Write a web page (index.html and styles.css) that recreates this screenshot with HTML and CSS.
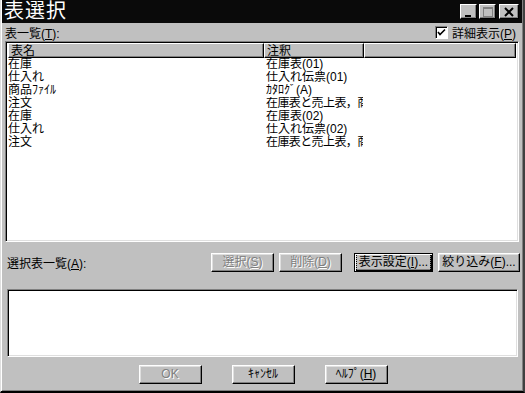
FILE: index.html
```html
<!DOCTYPE html>
<html lang="ja">
<head>
    <meta charset="UTF-8">
    <title>表選択</title>
    <link rel="stylesheet" href="styles.css">
</head>
<body>
    <div class="window">
        <div class="titlebar">
            <span class="title">表選択</span>
            <div class="caption-btns">
                <span class="cap"><svg width="14" height="12" viewBox="0 0 14 12"><rect x="3" y="9" width="6" height="2" fill="#000"/></svg></span>
                <span class="cap"><svg width="14" height="12" viewBox="0 0 14 12"><rect x="2.5" y="1.5" width="9" height="9" fill="none" stroke="#808080"/><rect x="2" y="1" width="10" height="2" fill="#808080"/></svg></span>
                <span class="cap close"><svg width="14" height="12" viewBox="0 0 14 12"><path d="M3 2 L11 10 M11 2 L3 10" stroke="#000" stroke-width="2"/></svg></span>
            </div>
        </div>

        <div class="content">
            <div class="top-row">
                <span>表一覧(<u>T</u>):</span>
                <label class="check">
                    <span class="box"><svg width="9" height="9" viewBox="0 0 9 9"><path d="M1 4 L3 6.5 L8 1.5" stroke="#000" stroke-width="1.6" fill="none"/></svg></span>
                    <span>詳細表示(<u>P</u>)</span>
                </label>
            </div>

            <div class="listbox tables">
                <div class="header">
                    <span class="col-name">表名</span>
                    <span class="col-note">注釈</span>
                    <span class="col-rest"></span>
                </div>
                <div class="row"><span class="c1">在庫</span><span class="c2">在庫表(01)</span></div>
                <div class="row"><span class="c1">仕入れ</span><span class="c2">仕入れ伝票(01)</span></div>
                <div class="row"><span class="c1">商品ﾌｧｲﾙ</span><span class="c2">ｶﾀﾛｸﾞ(A)</span></div>
                <div class="row"><span class="c1">注文</span><span class="c2 tight">在庫表と売上表，商</span></div>
                <div class="row"><span class="c1">在庫</span><span class="c2">在庫表(02)</span></div>
                <div class="row"><span class="c1">仕入れ</span><span class="c2">仕入れ伝票(02)</span></div>
                <div class="row"><span class="c1">注文</span><span class="c2 tight">在庫表と売上表，商</span></div>
            </div>

            <div class="action-row">
                <span class="sel-label">選択表一覧(<u>A</u>):</span>
                <div class="actions">
                    <span class="btn disabled w63">選択(<u>S</u>)</span>
                    <span class="btn disabled w63">削除(<u>D</u>)</span>
                    <span class="btn default w79"><span class="focus">表示設定(<u>I</u>)...</span></span>
                    <span class="btn w82">絞り込み(<u>F</u>)...</span>
                </div>
            </div>

            <div class="listbox selected"></div>

            <div class="bottom-row">
                <span class="btn disabled w63">OK</span>
                <span class="btn w63">ｷｬﾝｾﾙ</span>
                <span class="btn w63">ﾍﾙﾌﾟ(<u>H</u>)</span>
            </div>
        </div>
    </div>
</body>
</html>
```

FILE: styles.css
```css
body { margin: 0; font-family: "Liberation Sans", "Noto Sans CJK JP", sans-serif; font-size: 12px; color: #000; background: #c0c0c0; }
u { text-decoration: underline; text-underline-offset: 1px; }

.window { width: 525px; height: 393px; box-sizing: border-box; background: #c0c0c0; padding: 0 2px 2px 2px; border-left: 1px solid #dfdfdf; border-right: 2px solid #404040; border-bottom: 2px solid #000; box-shadow: inset 1px 0 #fff, inset -1px -1px #808080; display: flex; flex-direction: column; }

.titlebar { height: 23px; background: #0a0a0a; color: #fff; display: flex; align-items: center; justify-content: space-between; margin: 0 -1px 0 -1px; padding: 0 3px 0 2px; }
.title { font-size: 20px; line-height: 23px; letter-spacing: 1px; }
.caption-btns { display: flex; gap: 2px; }
.cap { width: 17px; height: 15px; box-sizing: border-box; background: #c0c0c0; border: 1px solid; border-color: #fff #000 #000 #fff; box-shadow: inset -1px -1px #808080; display: flex; align-items: center; justify-content: center; }
.cap.close { margin-left: 1px; width: 20px; }

.content { flex: 1; display: flex; flex-direction: column; padding: 0 1px 0 2px; }

.top-row { height: 18px; display: flex; align-items: center; justify-content: space-between; padding: 0 4px 0 0; }
.check { display: flex; align-items: center; gap: 4px; }
.box { width: 13px; height: 13px; box-sizing: border-box; background: #fff; border: 1px solid; border-color: #808080 #fff #fff #808080; box-shadow: inset 1px 1px #000; display: flex; align-items: center; justify-content: center; }

.listbox { background: #fff; box-sizing: border-box; border: 1px solid; border-color: #808080 #fff #fff #808080; box-shadow: inset 1px 1px #000, inset -1px -1px #dfdfdf; padding: 1px 2px 2px 2px; }
.tables { height: 201px; margin-right: 1px; }
.header { display: flex; height: 15px; line-height: 14px; }
.header span { box-sizing: border-box; background: #c0c0c0; border: 1px solid; border-color: #fff #000 #000 #fff; box-shadow: inset -1px -1px #808080; padding-left: 2px; }
.col-name { width: 256px; }
.col-note { width: 100px; }
.col-rest { flex: 1; }
.row { display: flex; height: 13px; line-height: 13px; white-space: nowrap; }
.c1 { width: 258px; }
.c2 { width: 97px; overflow: hidden; }
.c2.tight { letter-spacing: -0.6px; }

.action-row { display: flex; align-items: center; justify-content: space-between; margin-top: 11px; height: 19px; padding-left: 2px; }
.actions { display: flex; gap: 5px; }
.actions .default { margin-left: 7px; }

.btn { height: 19px; box-sizing: border-box; background: #c0c0c0; border: 1px solid; border-color: #fff #000 #000 #fff; box-shadow: inset -1px -1px #808080, inset 1px 1px #dfdfdf; display: flex; align-items: center; justify-content: center; line-height: 15px; white-space: nowrap; }
.btn.disabled { color: #808080; text-shadow: 1px 1px #fff; }
.btn.default { border: 1px solid #000; box-shadow: inset 1px 1px #fff, inset -1px -1px #000, inset -2px -2px #808080; }
.focus { outline: 1px dotted #000; outline-offset: 1px; padding: 0 1px; }
.w63 { width: 63px; }
.w79 { width: 79px; }
.w82 { width: 82px; }

.selected { height: 68px; margin: 17px 2px 0 2px; }

.bottom-row { display: flex; justify-content: center; gap: 30px; margin-top: 8px; padding-left: 1px; }
```
